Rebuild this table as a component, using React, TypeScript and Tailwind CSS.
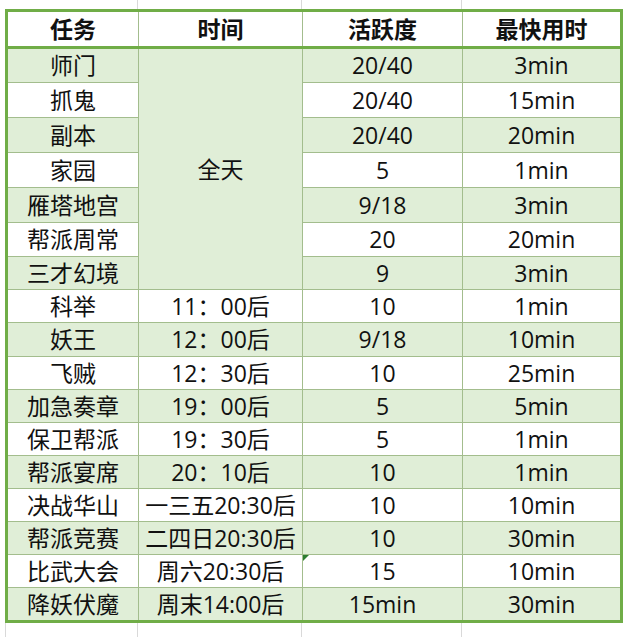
import React from "react"

type Row = { task: string; time?: string; active: string; fastest: string; h: number; flag?: boolean }

const rows: Row[] = [
  { task: "师门", active: "20/40", fastest: "3min", h: 35 },
  { task: "抓鬼", active: "20/40", fastest: "15min", h: 35 },
  { task: "副本", active: "20/40", fastest: "20min", h: 35 },
  { task: "家园", active: "5", fastest: "1min", h: 35 },
  { task: "雁塔地宫", active: "9/18", fastest: "3min", h: 35 },
  { task: "帮派周常", active: "20", fastest: "20min", h: 34 },
  { task: "三才幻境", active: "9", fastest: "3min", h: 33 },
  { task: "科举", time: "11：00后", active: "10", fastest: "1min", h: 33 },
  { task: "妖王", time: "12：00后", active: "9/18", fastest: "10min", h: 34 },
  { task: "飞贼", time: "12：30后", active: "10", fastest: "25min", h: 33 },
  { task: "加急奏章", time: "19：00后", active: "5", fastest: "5min", h: 33 },
  { task: "保卫帮派", time: "19：30后", active: "5", fastest: "1min", h: 33 },
  { task: "帮派宴席", time: "20：10后", active: "10", fastest: "1min", h: 33 },
  { task: "决战华山", time: "一三五20:30后", active: "10", fastest: "10min", h: 33 },
  { task: "帮派竞赛", time: "二四日20:30后", active: "10", fastest: "30min", h: 33 },
  { task: "比武大会", time: "周六20:30后", active: "15", fastest: "10min", h: 33, flag: true },
  { task: "降妖伏魔", time: "周末14:00后", active: "15min", fastest: "30min", h: 34 },
]

const cell = "border border-[#a3bd8d] text-center align-middle p-0 whitespace-nowrap"

export default function App() {
  return (
    <div
      className="w-[624px] h-[637px] bg-white overflow-hidden text-[#111] text-[23px] leading-none"
      style={{ fontFamily: '"Open Sans", "Noto Sans CJK SC", sans-serif' }}
    >
      {/* spreadsheet grid strip above */}
      <div className="flex h-[9px] pl-[5px]">
        <div className="w-[133px] border-r border-[#d9d9d9]" />
        <div className="w-[164px] border-r border-[#d9d9d9]" />
        <div className="w-[160px] border-r border-[#d9d9d9]" />
      </div>
      <div className="pl-[5px]">
        <table className="table-fixed border-collapse border-[3px] border-[#70ad47] w-[615px]">
          <colgroup>
            <col className="w-[132px]" />
            <col className="w-[164px]" />
            <col className="w-[160px]" />
            <col className="w-[159px]" />
          </colgroup>
          <thead>
            <tr className="h-[37px] bg-white">
              <th className={`${cell} border-b-[3px] border-b-[#70ad47] font-bold`}>任务</th>
              <th className={`${cell} border-b-[3px] border-b-[#70ad47] font-bold`}>时间</th>
              <th className={`${cell} border-b-[3px] border-b-[#70ad47] font-bold`}>活跃度</th>
              <th className={`${cell} border-b-[3px] border-b-[#70ad47] font-bold`}>最快用时</th>
            </tr>
          </thead>
          <tbody>
            {rows.map((r, i) => (
              <tr key={r.task} className={i % 2 === 0 ? "bg-[#e0eed7]" : "bg-white"} style={{ height: r.h }}>
                <td className={cell}>{r.task}</td>
                {i === 0 && (
                  <td rowSpan={7} className={`${cell} bg-[#e0eed7]`}>
                    全天
                  </td>
                )}
                {r.time && <td className={cell}>{r.time}</td>}
                <td className={`${cell} relative`}>
                  {r.flag && (
                    <span className="absolute left-0 top-0 w-0 h-0 border-t-[6px] border-r-[6px] border-t-[#2e7d32] border-r-transparent" />
                  )}
                  {r.active}
                </td>
                <td className={cell}>{r.fastest}</td>
              </tr>
            ))}
          </tbody>
        </table>
      </div>
      {/* spreadsheet grid strip below */}
      <div className="flex h-[20px] pl-[5px]">
        <div className="w-[133px] border-r border-l border-[#d9d9d9]" />
        <div className="w-[164px] border-r border-[#d9d9d9]" />
        <div className="w-[160px] border-r border-[#d9d9d9]" />
      </div>
    </div>
  )
}
